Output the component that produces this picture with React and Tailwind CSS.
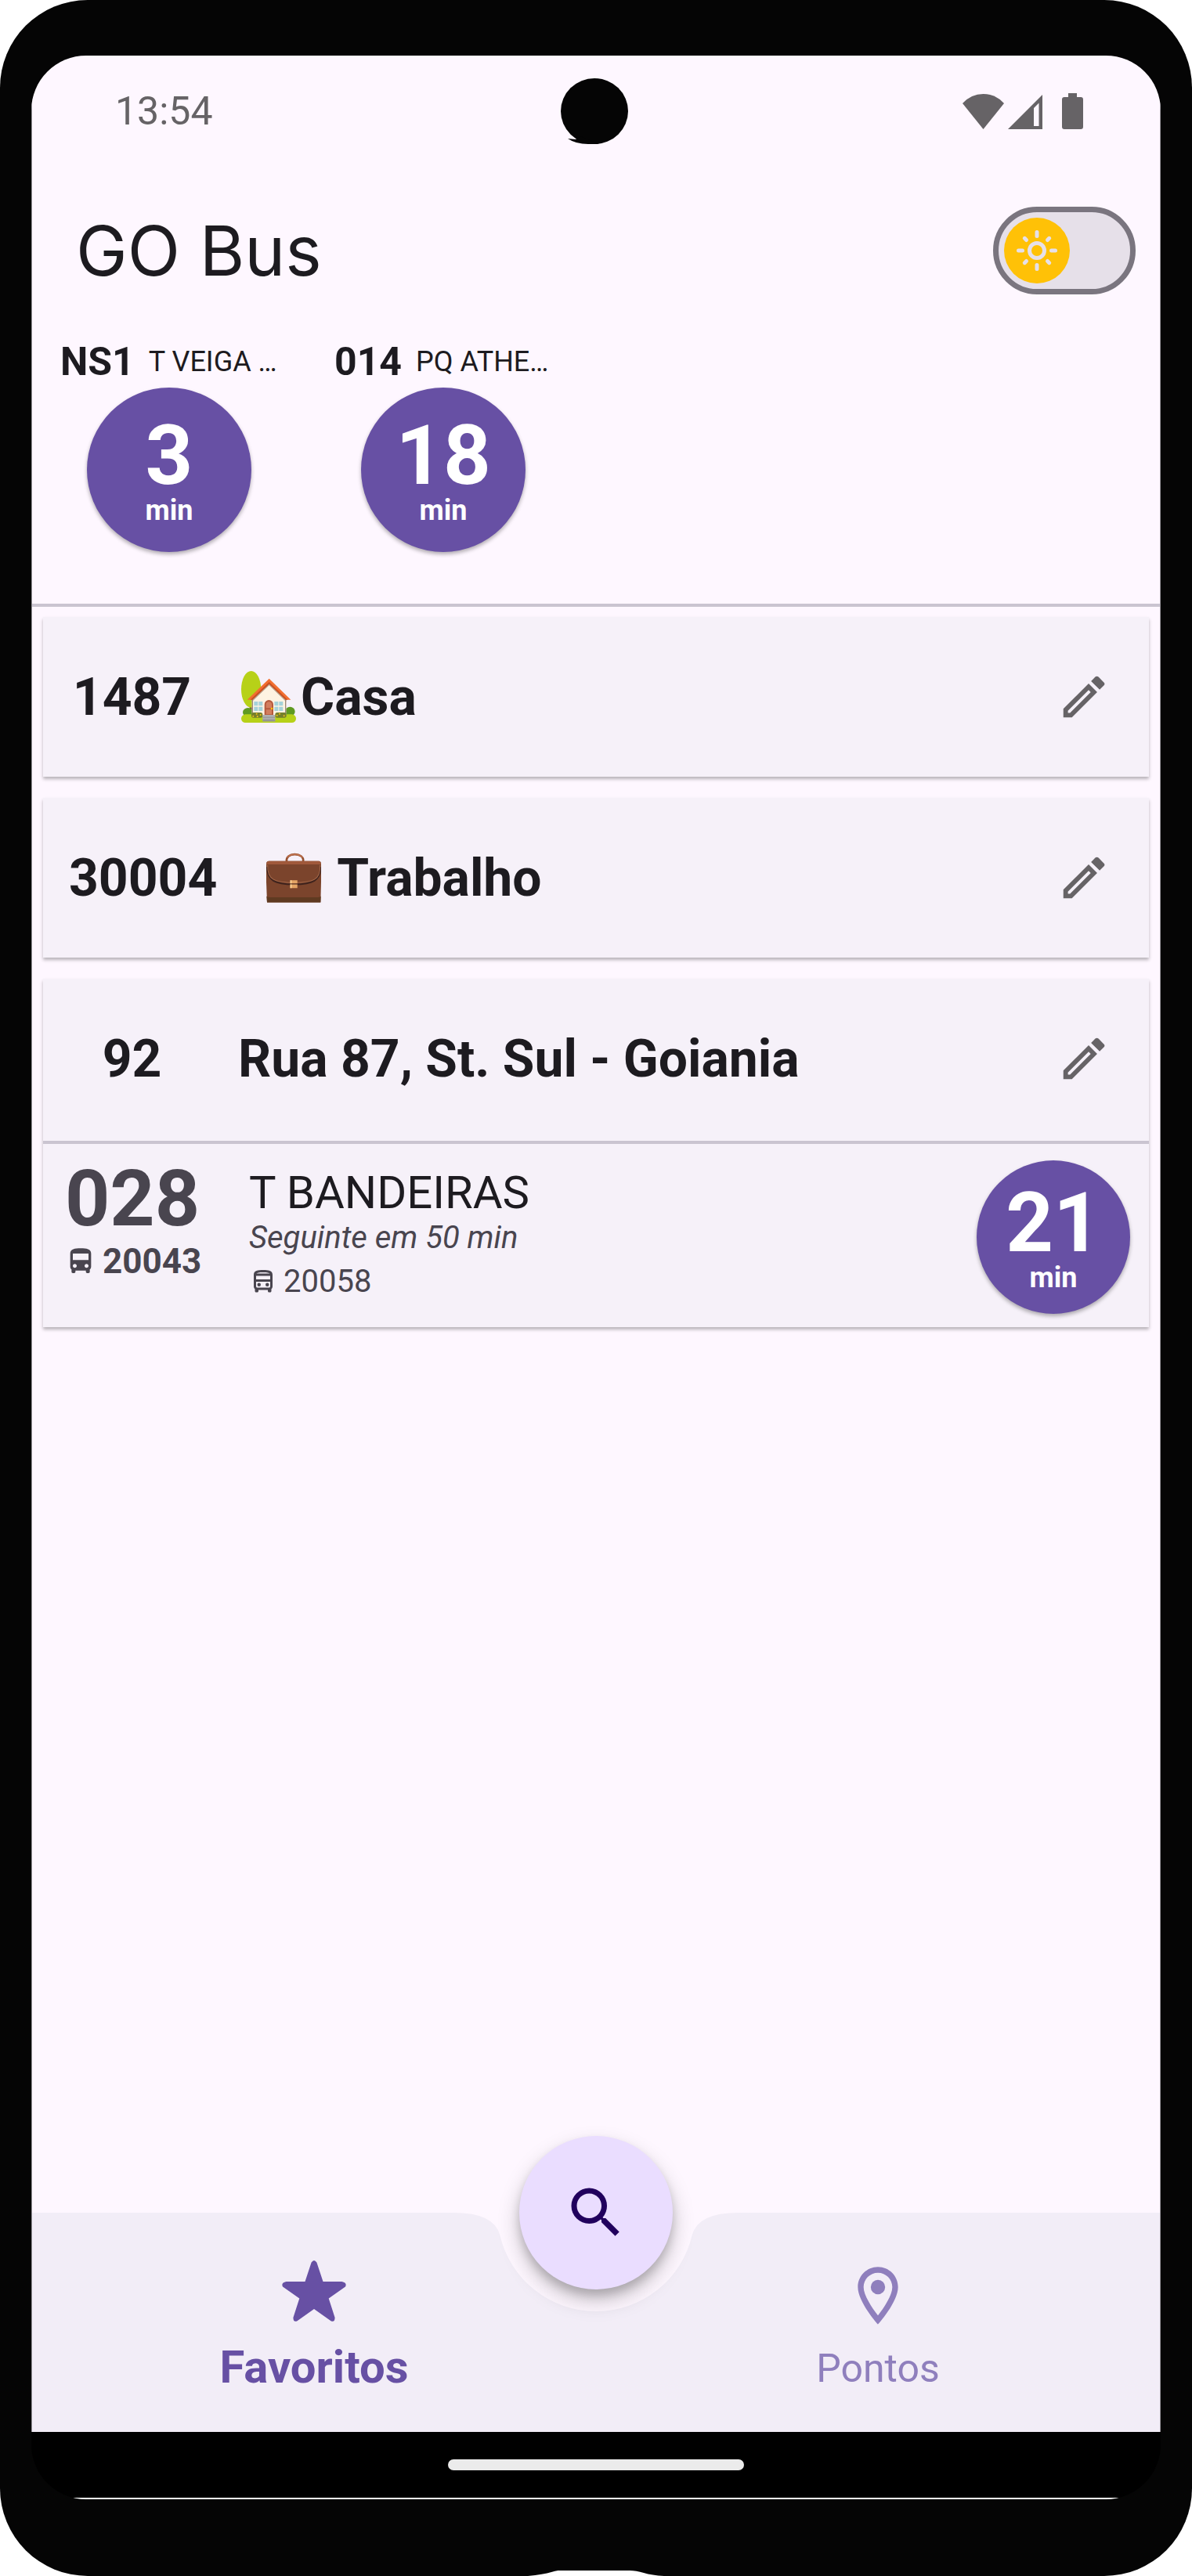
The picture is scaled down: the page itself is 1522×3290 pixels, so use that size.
import { useState } from 'react'
import {
  MdDirectionsBus,
  MdOutlineDirectionsBus,
  MdOutlineEdit,
  MdOutlineLocationOn,
  MdSearch,
} from 'react-icons/md'

const departures = [
  { line: 'NS1', destination: 'T VEIGA …', minutes: 3 },
  { line: '014', destination: 'PQ ATHE…', minutes: 18 },
]

const stops = [
  { code: '1487', name: 'Casa', icon: HouseIcon, iconClass: 'ml-1 mr-1.5' },
  { code: '30004', name: 'Trabalho', icon: BriefcaseIcon, iconClass: 'ml-2 mr-5' },
  {
    code: '92',
    name: 'Rua 87, St. Sul - Goiania',
    bus: {
      line: '028',
      vehicle: '20043',
      destination: 'T BANDEIRAS',
      minutes: 21,
      next: 'Seguinte em 50 min',
      nextVehicle: '20058',
    },
  },
]

function HouseIcon({ className }) {
  return (
    <svg viewBox="41 42 210 198" className={className} aria-hidden="true">
      <rect x="73" y="165" width="12" height="50" fill="#7d5147" />
      <ellipse cx="79" cy="112" rx="38" ry="70" fill="#b7d118" />
      <ellipse cx="67" cy="200" rx="20" ry="17" fill="#5f9a22" />
      <ellipse cx="228" cy="197" rx="19" ry="18" fill="#5f9a22" />
      <rect x="41" y="208" width="210" height="32" rx="16" fill="#b7d118" />
      <path d="M148 84L213 150V212H82V150z" fill="#fef3e2" />
      <path d="M148 84L82 150V160L148 97L213 160V150z" fill="#b9a48e" />
      <path d="M82 150h4v62h-4zM209 150h4v62h-4z" fill="#9c8677" />
      <path d="M148 71L64 152H82L148 88L213 152H231z" fill="#f26f30" />
      <path d="M148 84L76 152H84L148 92L211 152H219z" fill="#c94f22" />
      <path
        d="M90 159h15v16H90zM108 159h15v16h-15zM90 179h15v16H90zM108 179h15v16h-15zM168 159h15v16h-15zM186 159h15v16h-15zM168 179h15v16h-15zM186 179h15v16h-15z"
        fill="#a5d2d9"
      />
      <path d="M130 210V170a17 17 0 0 1 34 0v40z" fill="#b65a3c" />
      <path d="M136 184V171a11 11 0 0 1 22 0v13zM136 190h22v18h-22z" fill="#d27d5d" />
      <circle cx="158" cy="186" r="4" fill="#fdc800" />
      <rect x="80" y="201" width="43" height="20" rx="8" fill="#75802c" />
      <rect x="171" y="201" width="43" height="20" rx="8" fill="#75802c" />
      <g fill="#fcc21b">
        <circle cx="87" cy="215" r="3" />
        <circle cx="100" cy="206" r="3" />
        <circle cx="103" cy="216" r="3" />
        <circle cx="115" cy="210" r="3" />
        <circle cx="178" cy="212" r="3" />
        <circle cx="188" cy="206" r="3" />
        <circle cx="205" cy="214" r="3" />
      </g>
      <path d="M123 210h48v25h-48z" fill="#b0b0b0" />
      <path d="M123 218h48v3h-48zM123 227h48v8h-48z" fill="#949494" />
    </svg>
  )
}

function BriefcaseIcon({ className }) {
  return (
    <svg viewBox="47 41 208 187" className={className} aria-hidden="true">
      <path d="M124 73c-2-18 12-27 31-27s35 9 32 27" fill="none" stroke="#94502f" strokeWidth="8" />
      <path d="M126 58c6-9 17-12 29-12s24 3 30 12" fill="none" stroke="#c27350" strokeWidth="4" />
      <path d="M57 71H246Q255 71 255 82V150L253 228H50L47 150V82Q47 71 57 71z" fill="#7b442c" />
      <path d="M57 71H246Q254 71 255 84H47Q48 71 57 71z" fill="#a0593b" />
      <path d="M48 205Q54 209 62 209H241Q250 209 254 205L253 228H50z" fill="#5f3a21" />
      <path
        d="M50 94c0 52 30 64 102 66 72-2 101-14 101-66"
        fill="none"
        stroke="#3f231d"
        strokeWidth="6"
      />
      <path
        d="M52 86c-2 58 28 66 100 68 72-2 102-10 99-68"
        fill="none"
        stroke="#a6694a"
        strokeWidth="3"
      />
      <path d="M138 144h27v12h-27zM138 160h27v14h-27z" fill="#e5a565" />
      <path d="M138 144h5v12h-5zM138 160h5v14h-5z" fill="#ffd79a" />
    </svg>
  )
}

function StarIcon({ className }) {
  return (
    <svg viewBox="0 0 82 78" className={className} aria-hidden="true">
      <path
        d="M37.6 2.6Q41-2.6 44.4 2.6L52.5 27H76.5Q83.5 28.5 81 33.5L59.7 48.5L67.6 73Q67.5 79.5 62.5 77.3L41 62L19.5 77.3Q14.5 79.5 14.4 73L22.3 48.5L1 33.5Q-1.5 28.5 5.5 27H29.5z"
        fill="currentColor"
      />
    </svg>
  )
}

function SunIcon({ className }) {
  return (
    <svg
      viewBox="-26 -26 52 52"
      className={className}
      fill="none"
      stroke="currentColor"
      strokeWidth="5"
      strokeLinecap="round"
      aria-hidden="true"
    >
      <circle r="9.5" />
      <path d="M0-23.5V-18.5M0 18.5V23.5M-23.5 0H-18.5M18.5 0H23.5M-15.7-15.7L-13.5-13.5M15.7-15.7L13.5-13.5M-15.7 15.7L-13.5 13.5M15.7 15.7L13.5 13.5" />
    </svg>
  )
}

function StatusBar() {
  return (
    <div className="relative flex h-[142px] items-center justify-between pr-[98px] pl-[106px] text-[#666366]">
      <span className="text-[50px]">13:54</span>
      <svg
        viewBox="0 0 92 84"
        className="absolute top-[29px] left-1/2 h-[84px] w-[92px] -translate-x-1/2"
        aria-hidden="true"
      >
        <ellipse cx="44" cy="42" rx="43" ry="42" fill="#050505" />
        <path d="M10 77L20 78L26 74L50 84H36Q20 84 10 77z" fill="#050505" />
      </svg>
      <svg viewBox="0 0 154 46" className="h-[46px] w-[154px] fill-current" aria-hidden="true">
        <path d="M0 13Q11 1 26.5 1T53 13L26.5 46z" />
        <path d="M58 46L102 2V46zM91 19V42H97.5V12.5z" fillRule="evenodd" />
        <path d="M135 0h11v5h5q3 0 3 3v35q0 3-3 3h-21q-3 0-3-3V8q0-3 3-3h5z" />
      </svg>
    </div>
  )
}

function Header() {
  const [dark, setDark] = useState(false)

  return (
    <header className="flex h-[214px] items-center justify-between pr-[31px] pl-14">
      <h1 className="font-[Inter,sans-serif] text-[88px] leading-none">GO Bus</h1>
      <button
        type="button"
        role="switch"
        aria-checked={dark}
        aria-label="Tema escuro"
        onClick={() => setDark(!dark)}
        className="flex h-28 w-[182px] items-center rounded-full border-[7px] border-[#7a757f] bg-[#e6e0e9] p-[7px]"
      >
        <span className="flex size-[84px] items-center justify-center rounded-full bg-[#ffc107] text-[#e6e0e9]">
          <SunIcon className="size-[52px]" />
        </span>
      </button>
    </header>
  )
}

function MinutesBadge({ minutes, className }) {
  return (
    <div
      className={`flex shrink-0 flex-col items-center justify-center rounded-full bg-[#6750a4] pt-1 font-bold text-white shadow-[0_3px_5px_rgba(0,0,0,0.3)] ${className}`}
    >
      <span className="text-[106px] leading-[100px]">{minutes}</span>
      <span className="text-4xl leading-[40px]">min</span>
    </div>
  )
}

function Departures() {
  return (
    <section className="flex border-b-4 border-[#cac4d0] pb-[66px]">
      {departures.map((item) => (
        <div key={item.line} className="flex w-[350px] flex-col items-center">
          <div className="flex h-[68px] w-full items-center gap-[18px] px-9 pt-0.5 whitespace-nowrap">
            <span className="text-[50px] font-bold">{item.line}</span>
            <span className="text-4xl">{item.destination}</span>
          </div>
          <MinutesBadge minutes={item.minutes} className="size-[210px]" />
        </div>
      ))}
    </section>
  )
}

function BusRow({ bus }) {
  return (
    <div className="flex border-t-4 border-[#cac4d0] pt-[21px] pr-6 pb-[17px] pl-7 text-[#49454f]">
      <div className="w-[235px] shrink-0 font-bold">
        <p className="text-[100px] leading-[98px]">{bus.line}</p>
        <p className="flex items-center gap-2 text-[44px] leading-[62px]">
          <MdDirectionsBus className="size-10" aria-hidden="true" />
          {bus.vehicle}
        </p>
      </div>
      <div className="min-w-0 flex-1 pt-3 text-[40px]">
        <p className="text-[58px] leading-[58px] text-[#1d1b20]">{bus.destination}</p>
        <p className="leading-[58px] italic">{bus.next}</p>
        <p className="flex items-center gap-2 leading-[54px]">
          <MdOutlineDirectionsBus className="size-9" aria-hidden="true" />
          {bus.nextVehicle}
        </p>
      </div>
      <MinutesBadge minutes={bus.minutes} className="size-[196px]" />
    </div>
  )
}

function StopCard({ stop }) {
  return (
    <article className="bg-[#f6f1f9] shadow-[0_3px_4px_rgba(0,0,0,0.28)]">
      <div className="flex h-[204px] items-center pr-12 pl-[33px] text-[66px] font-bold">
        <span className="min-w-[161px] text-center">{stop.code}</span>
        <h2 className="ml-[55px] flex flex-1 items-center">
          {stop.icon && <stop.icon className={`h-[66px] w-[70px] shrink-0 ${stop.iconClass}`} />}
          {stop.name}
        </h2>
        <button type="button" aria-label={`Editar ${stop.name}`} className="text-[#666366]">
          <MdOutlineEdit className="size-[70px]" />
        </button>
      </div>
      {stop.bus && (
        <div className="pt-[3px]">
          <BusRow bus={stop.bus} />
        </div>
      )}
    </article>
  )
}

function BottomNav() {
  return (
    <nav className="relative h-[280px]">
      {/* bar with the notch for the search button */}
      <div className="absolute inset-0 flex">
        <div className="flex-1 bg-[#f2edf7]" />
        <svg viewBox="-182 0 364 280" className="h-[280px] w-[364px]" aria-hidden="true">
          <path
            d="M-182 0Q-129.5 0 -122.6 29.1A126 126 0 0 0 122.6 29.1Q129.5 0 182 0V280H-182z"
            fill="#f2edf7"
          />
        </svg>
        <div className="flex-1 bg-[#f2edf7]" />
      </div>
      <div className="relative grid h-full grid-cols-2">
        <a
          href="#favoritos"
          className="flex flex-col items-center pt-14 font-bold text-[#6750a4]"
        >
          <span className="flex h-[88px] items-center">
            <StarIcon className="h-[78px] w-[82px]" />
          </span>
          <span className="mt-5 text-[58px] leading-[66px]">Favoritos</span>
        </a>
        <a href="#pontos" className="flex flex-col items-center pt-[62px] text-[#8f7fbd]">
          <MdOutlineLocationOn className="size-[88px]" aria-hidden="true" />
          <span className="mt-4 text-[50px] leading-[66px]">Pontos</span>
        </a>
      </div>
      <button
        type="button"
        aria-label="Buscar"
        className="absolute -top-[98px] left-1/2 flex size-[196px] -translate-x-1/2 items-center justify-center rounded-full bg-[#eaddff] text-[#21005d] shadow-[0_14px_28px_rgba(0,0,0,0.22),0_8px_12px_rgba(0,0,0,0.16)]"
      >
        <MdSearch className="size-[84px]" />
      </button>
    </nav>
  )
}

const App = () => {
  return (
    <div className="min-h-screen bg-white">
      <div className="relative flex min-h-screen flex-col rounded-[112px] bg-[#050505] px-10 pt-[71px] pb-[98px] font-[Roboto,sans-serif] text-[#1d1b20]">
        <div className="flex flex-1 flex-col overflow-hidden rounded-[70px]">
          <div className="flex flex-1 flex-col border-x border-[#97949a] bg-[#fef7ff]">
            <StatusBar />
            <Header />
            <Departures />
            <main className="flex flex-1 flex-col gap-[27px] px-3.5 pt-[13px]">
              {stops.map((stop) => (
                <StopCard key={stop.code} stop={stop} />
              ))}
            </main>
            <BottomNav />
          </div>
          <div className="flex h-[84px] items-center justify-center bg-black">
            <div className="h-3.5 w-[378px] rounded-full bg-[#ebebeb]" />
          </div>
          <div className="h-0.5 bg-white" />
        </div>
        <svg
          viewBox="0 0 174 7"
          className="absolute bottom-0 left-1/2 h-[7px] w-[174px] -translate-x-1/2"
          aria-hidden="true"
        >
          <path d="M0 7Q20 5 30 2T44 0H130Q138 0 148 3T174 7z" fill="#fff" />
        </svg>
      </div>
    </div>
  )
}

export default App
